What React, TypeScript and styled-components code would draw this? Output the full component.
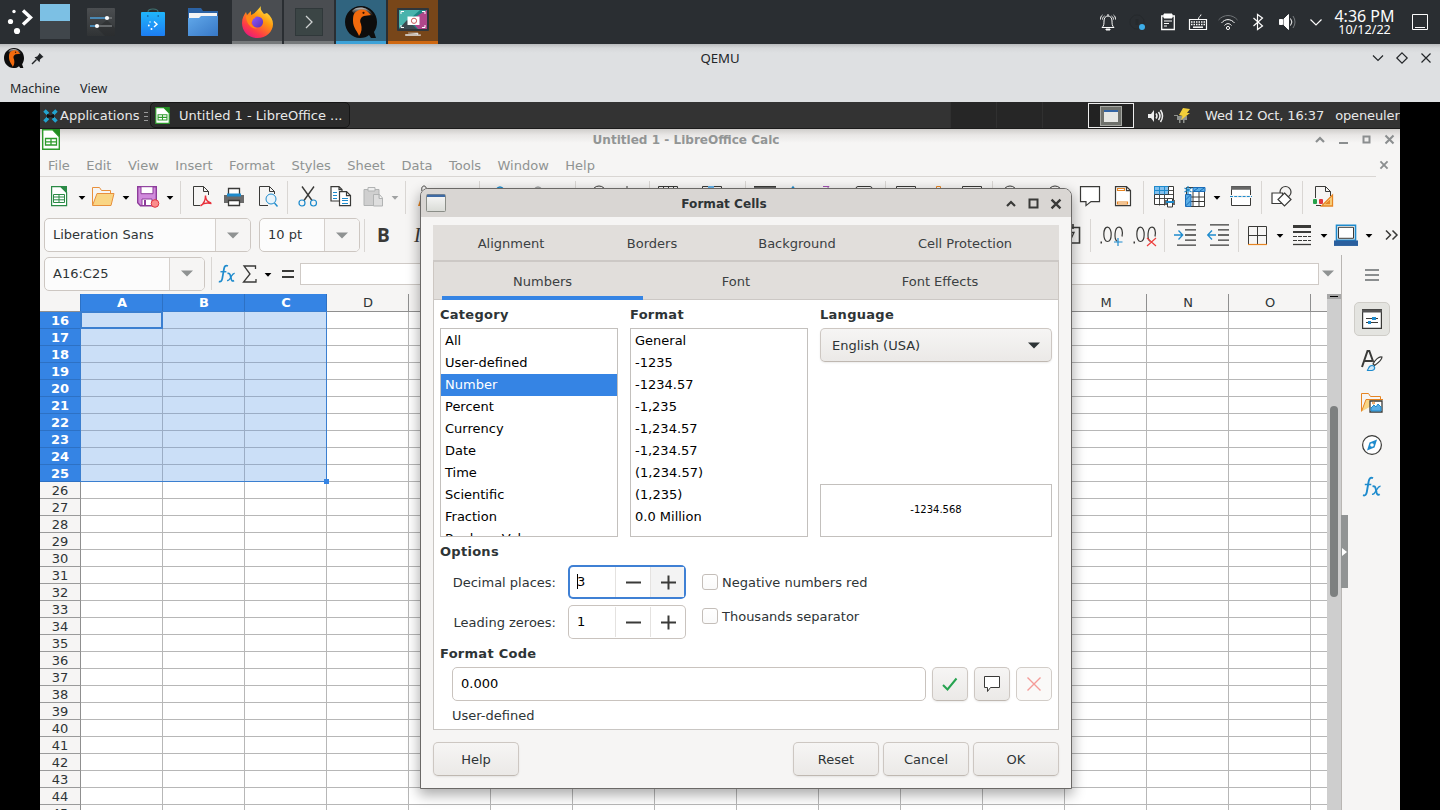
import React from "react";
import styled, { createGlobalStyle, css } from "styled-components";

const INK = "#3a3a38";
const BLUE = "#1e8bcd";
const ORANGE = "#e68523";
const ui = '"DejaVu Sans", sans-serif';
const kde = '"Noto Sans", sans-serif';

const Global = createGlobalStyle`
  * { box-sizing: border-box; }
  body { margin: 0; background: #000; overflow: hidden; }
  svg { display: block; flex: none; overflow: visible; }
`;

const Screen = styled.div`
  width: 1440px;
  height: 810px;
  overflow: hidden;
  display: flex;
  flex-direction: column;
  background: #000;
  font: 13px/16px ${ui};
  color: #2e3436;
  white-space: nowrap;
`;

/* ---------- host desktop panel ---------- */
const HostPanel = styled.header`
  height: 44px;
  flex: none;
  display: flex;
  background: #2a2e32;
  color: #fcfcfc;
  font-family: ${kde};
`;
const Launcher = styled.div<{ $w: number }>`
  width: ${(p) => p.$w}px;
  height: 44px;
  display: flex;
  align-items: center;
  justify-content: center;
`;
const Pager = styled.div`
  width: 30px;
  height: 35px;
  margin: 4px 0 0 2px;
  background: #40464b;
  border-top: 17px solid #7cc0e4;
`;
const TaskTile = styled.div<{ $bg: string; $line: string }>`
  width: 50px;
  height: 44px;
  margin-right: 2px;
  display: flex;
  align-items: center;
  justify-content: center;
  background: ${(p) => p.$bg};
  box-shadow: inset 0 -3px ${(p) => p.$line};
`;
const Tray = styled.div`
  margin-left: auto;
  display: flex;
  width: 347px;
`;
const Clock = styled.div`
  width: 70px;
  text-align: center;
  padding: 8px 0 0 1px;
  font-size: 16px;
  line-height: 17px;
`;
const ClockDate = styled.div`
  font-size: 12.6px;
  line-height: 14px;
  margin-top: -2px;
`;

/* ---------- emulator window ---------- */
const QemuTitle = styled.div`
  height: 30px;
  flex: none;
  display: grid;
  grid-template-columns: 1fr 200px 1fr;
  align-items: center;
  padding: 0 8px 2px 4px;
  background: linear-gradient(#b9bbbd, #d6d8da 4px, #dee0e2 9px);
  font: 13.2px/16px ${kde};
  color: #232629;
`;
const QemuIcons = styled.div<{ $end?: boolean }>`
  display: flex;
  align-items: center;
  gap: 8px;
  ${(p) => p.$end && css`justify-content: flex-end; gap: 12px;`}
`;
const Centered = styled.div`
  text-align: center;
  padding-left: 4px;
`;
const QemuMenu = styled.div`
  height: 28px;
  flex: none;
  display: flex;
  gap: 20px;
  padding: 7px 10px 5px;
  background: #dee0e2;
  font: 12.5px/16px ${kde};
  color: #232629;
`;
const Guest = styled.div`
  position: relative;
  width: 1360px;
  height: 708px;
  margin: 0 40px;
  overflow: hidden;
  display: flex;
  flex-direction: column;
`;

/* ---------- guest panel ---------- */
const GuestPanel = styled.div`
  height: 27px;
  flex: none;
  display: flex;
  background: #333;
  color: #e8e8e8;
  border-bottom: 1px solid #1c1c1c;
  line-height: 18px;
`;
const AppsButton = styled.div`
  width: 110px;
  flex: none;
  display: flex;
  align-items: center;
  padding: 1px 0 0 3px;
  gap: 2px;
`;
const GuestTask = styled.div`
  width: 200px;
  height: 26px;
  flex: none;
  display: flex;
  align-items: center;
  gap: 9px;
  padding: 1px 0 0 4px;
  background: #2b2b2b;
  border: 1px solid #161616;
  border-radius: 5px;
`;
const Workspaces = styled.div`
  margin-left: 600px;
  width: 138px;
  flex: none;
  display: flex;
  background: #262626;
`;
const Workspace = styled.div`
  width: 46px;
  border-left: 1px solid #303030;
`;
const ActiveWorkspace = styled.div`
  width: 46px;
  height: 25px;
  margin-top: 1px;
  flex: none;
  border: 1px solid #eee;
  background: #222;
  display: flex;
  align-items: center;
  justify-content: center;
`;
const PanelStatus = styled.div`
  display: flex;
  align-items: center;
  padding: 1px 0 0 13px;
`;
const PanelText = styled.span<{ $ml: number }>`
  margin-left: ${(p) => p.$ml}px;
  letter-spacing: -0.13px;
`;

/* ---------- spreadsheet window ---------- */
const Calc = styled.div`
  flex: 1;
  min-height: 0;
  display: flex;
  flex-direction: column;
  background: linear-gradient(#cfcdcb, #e9e7e6 6px, #f6f5f4 14px);
`;
const CalcTitle = styled.div`
  height: 23px;
  flex: none;
  display: grid;
  grid-template-columns: 496px 300px 1fr;
  padding-right: 6px;
  line-height: 22px;
  font-weight: bold;
  font-size: 12.05px;
  color: #929595;
  text-align: center;
`;
const TitleButtons = styled.div<{ $top: number; $gap: number }>`
  display: flex;
  justify-content: flex-end;
  gap: ${(p) => p.$gap}px;
  padding-top: ${(p) => p.$top}px;
`;
const MenuBar = styled.div`
  height: 25px;
  margin-right: 24px;
  flex: none;
  display: flex;
  gap: 16.5px;
  padding: 6px 0 0 8px;
  border-bottom: 1px solid #d9d6d3;
  color: #8f9392;
`;
const DocClose = styled.div`
  margin: 3px -12px 0 auto;
`;
const Toolbar = styled.div<{ $h: number }>`
  height: ${(p) => p.$h}px;
  flex: none;
  display: flex;
  align-items: center;
`;
const Slot = styled.div<{ $gap: number; $w?: number }>`
  margin-left: ${(p) => p.$gap}px;
  width: ${(p) => p.$w ?? 22}px;
  flex: none;
`;
const Rule = styled.div<{ $gap: number }>`
  margin-left: ${(p) => p.$gap}px;
  width: 1px;
  height: 33px;
  flex: none;
  background: #d9d6d3;
`;
const Combo = styled.div<{ $w: number; $gap: number }>`
  width: ${(p) => p.$w}px;
  height: 34px;
  margin-left: ${(p) => p.$gap}px;
  flex: none;
  display: flex;
  border: 1px solid #cdc7c2;
  border-radius: 5px;
  background: #fcfcfc;
  line-height: 31px;
  padding-left: 8px;
  overflow: hidden;
`;
const ComboArrow = styled.div`
  margin-left: auto;
  width: 35px;
  padding-right: 1px;
  display: flex;
  align-items: center;
  justify-content: center;
  border-left: 1px solid #d5d0cc;
  background: #f6f5f4;
`;
const Glyph = styled.span<{ $gap: number; $w: number; $size: number; $italic?: boolean }>`
  margin-left: ${(p) => p.$gap}px;
  width: ${(p) => p.$w}px;
  flex: none;
  font: bold ${(p) => p.$size}px/22px "Open Sans", sans-serif;
  color: ${INK};
  ${(p) => p.$italic && css`font-family: "Liberation Serif", serif; font-style: italic; font-weight: normal;`}
`;
const Workarea = styled.div`
  flex: 1;
  min-height: 0;
  display: flex;
`;
const SheetPane = styled.div`
  width: 1301px;
  flex: none;
  display: flex;
  flex-direction: column;
`;
const FormulaInput = styled.div`
  width: 1019px;
  height: 22px;
  margin-left: 6px;
  background: #fff;
  border: 1px solid #cfcac6;
`;
const SheetBody = styled.div`
  flex: 1;
  min-height: 0;
  display: flex;
`;
const Grid = styled.div`
  position: relative;
  width: 1287px;
  overflow: hidden;
  background: #fff;
`;
const GridRow = styled.div`
  display: flex;
  width: 1400px;
`;
const headCell = css<{ $on?: boolean }>`
  flex: none;
  text-align: center;
  color: ${(p) => (p.$on ? "#fff" : "#2e3436")};
  font-weight: ${(p) => (p.$on ? "bold" : "normal")};
  background: ${(p) => (p.$on ? "#3584e4" : "#f6f5f4")};
`;
const ColHead = styled.div<{ $on?: boolean }>`
  ${headCell}
  width: 82px;
  height: 18px;
  border-right: 1px solid ${(p) => (p.$on ? "#2d71c4" : "#8f8f8f")};
  border-bottom: 1px solid #8f8f8f;
  line-height: 18px;
  padding-left: 1px;
`;
const Corner = styled.div`
  width: 41px;
  height: 18px;
  flex: none;
  background: #f6f5f4;
  border-right: 1px solid #2d71c4;
  border-bottom: 1px solid #8f8f8f;
`;
const RowHead = styled.div<{ $on?: boolean }>`
  ${headCell}
  width: 41px;
  height: 17px;
  border-right: 1px solid ${(p) => (p.$on ? "#2d71c4" : "#8f8f8f")};
  border-bottom: 1px solid ${(p) => (p.$on ? "#2d71c4" : "#9a9a9a")};
  line-height: 17px;
`;
const Cell = styled.div<{ $on?: boolean }>`
  width: 82px;
  height: 17px;
  flex: none;
  background: ${(p) => (p.$on ? "#cbdff7" : "#fff")};
  border-right: 1px solid ${(p) => (p.$on ? "#9badc5" : "#b7b7b7")};
  border-bottom: 1px solid ${(p) => (p.$on ? "#9badc5" : "#b7b7b7")};
`;
const Selection = styled.div`
  position: absolute;
  left: 40px;
  top: 17px;
  width: 247px;
  height: 171px;
  border: 1px solid #3b7fd0;
`;
const CellCursor = styled.div`
  width: 82px;
  height: 17px;
  border: solid #3b7fd0;
  border-width: 1px 2px 2px 1px;
`;
const FillHandle = styled.div`
  position: absolute;
  right: -3px;
  bottom: -3px;
  width: 5px;
  height: 5px;
  background: #3584e4;
`;
const ScrollTrack = styled.div`
  width: 14px;
  background: #cecece;
  padding-left: 3px;
`;
const SplitGrip = styled.div`
  height: 5px;
  margin-left: -3px;
  background: #a8a8a8;
  display: flex;
  justify-content: center;
  align-items: center;
  &::before { content: ""; width: 8px; height: 1px; background: #000; }
`;
const ScrollThumb = styled.div`
  width: 8px;
  height: 191px;
  margin-top: 107px;
  border-radius: 4px;
  background: #7d8080;
`;
const Sidebar = styled.div`
  position: relative;
  width: 59px;
  margin-top: 2px;
  border-left: 1px solid #b9b6b3;
  display: flex;
  flex-direction: column;
  align-items: center;
  gap: 8px;
  padding: 2px 0 0 2px;
`;
const SideButton = styled.div<{ $on?: boolean; $first?: boolean }>`
  width: 36px;
  height: ${(p) => (p.$first ? 36 : 34)}px;
  margin-bottom: ${(p) => (p.$first ? 1 : 0)}px;
  flex: none;
  display: flex;
  align-items: center;
  justify-content: center;
  border-radius: 5px;
  ${(p) => p.$on && css`background: #e4e4e0; border: 1px solid #cfcdc8;`}
`;
const CollapseHandle = styled.div`
  position: absolute;
  left: -1px;
  top: 260px;
  width: 7px;
  height: 73px;
  background: #919494;
  display: flex;
  align-items: center;
`;

/* ---------- dialog ---------- */
const Dialog = styled.section`
  position: absolute;
  left: 380px;
  top: 86px;
  width: 652px;
  height: 601px;
  border: 1px solid #6b6967;
  border-radius: 8px 8px 0 0;
  background: #f6f5f4;
  box-shadow: 0 5px 13px 1px rgba(0, 0, 0, 0.33);
`;
const DialogTitle = styled.div`
  height: 28px;
  border-radius: 7px 7px 0 0;
  background: #d9d6d3;
  display: grid;
  grid-template-columns: 198px 200px 1fr;
  padding: 0 10px 0 5px;
  font-weight: bold;
  font-size: 12.1px;
  line-height: 30px;
  text-align: center;
`;
const WindowMenu = styled.div`
  padding-top: 5px;
`;
const Notebook = styled.div`
  width: 626px;
  height: 505px;
  margin: 8px 12px 12px;
  display: flex;
  flex-direction: column;
`;
const Tabs = styled.div<{ $h: number; $last?: boolean }>`
  height: ${(p) => p.$h}px;
  flex: none;
  display: flex;
  padding-left: ${(p) => (p.$last ? 8 : 0)}px;
  background: #e1dedb;
  border-bottom: ${(p) => (p.$last ? 1 : 2)}px solid #ccc8c5;
  line-height: ${(p) => (p.$last ? 39 : 38)}px;
  ${(p) => p.$last && css`border-left: 1px solid #cdc7c2; border-right: 1px solid #cdc7c2;`}
`;
const Tab = styled.div<{ $w: number; $gap?: number; $on?: boolean }>`
  width: ${(p) => p.$w}px;
  margin-left: ${(p) => p.$gap ?? 0}px;
  flex: none;
  text-align: center;
  color: #3b4042;
  ${(p) => p.$on && css`margin-bottom: -1px; box-shadow: inset 0 -4px #3584e4;`}
`;
const TabBody = styled.div`
  flex: 1;
  min-height: 0;
  background: #fff;
  border: 1px solid #c9c6c3;
  border-top: 0;
  padding: 6px 6px 0;
`;
const Heading = styled.div<{ $mt?: number }>`
  margin-top: ${(p) => p.$mt ?? 0}px;
  font-weight: bold;
  letter-spacing: 0.28px;
  height: 18px;
  line-height: 18px;
`;
const Columns = styled.div`
  display: flex;
  gap: 12px;
`;
const ListColumn = styled.div`
  width: 178px;
`;
const ListBox = styled.div`
  height: 209px;
  margin-top: 4px;
  padding-top: 1px;
  border: 1px solid #c3c0bd;
  overflow: hidden;
  color: #000;
`;
const ListItem = styled.div<{ $on?: boolean }>`
  height: 22px;
  line-height: 22px;
  padding-left: 4px;
  ${(p) => p.$on && css`background: #3584e4; color: #fff;`}
`;
const LangColumn = styled.div`
  width: 232px;
`;
const buttonFace = css`
  border: 1px solid #cdc7c2;
  border-bottom-color: #bfb8b1;
  border-radius: 5px;
  background: linear-gradient(#f6f5f4, #ebe9e7);
  box-shadow: 0 1px 2px rgba(0, 0, 0, 0.08);
`;
const LangSelect = styled.div`
  ${buttonFace}
  height: 34px;
  margin-top: 4px;
  padding: 1px 11px 0;
  display: flex;
  align-items: center;
  justify-content: space-between;
`;
const Preview = styled.div`
  height: 53px;
  margin-top: 122px;
  border: 1px solid #c3c0bd;
  text-align: center;
  font-size: 10px;
  line-height: 50px;
  color: #000;
`;
const OptionRows = styled.div`
  height: 80px;
  display: flex;
  margin-top: 4px;
`;
const NumberFields = styled.div`
  width: 246px;
  display: flex;
  flex-direction: column;
  gap: 6px;
`;
const Field = styled.div`
  display: flex;
  justify-content: flex-end;
  align-items: center;
  gap: 12px;
  height: 34px;
`;
const FieldLabel = styled.span`
  padding-top: 2px;
`;
const Spin = styled.div<{ $focus?: boolean }>`
  width: 118px;
  height: 34px;
  display: grid;
  grid-template-columns: 1fr 35px 35px;
  background: #fff;
  color: #000;
  border-radius: 5px;
  line-height: 31px;
  overflow: hidden;
  padding: 1px;
  box-shadow: inset 0 0 0 ${(p) => (p.$focus ? "2px #3f80d4" : "1px #c9c3be")};
`;
const SpinValue = styled.div`
  padding-left: 8px;
  display: flex;
  align-items: center;
  height: 31px;
`;
const Caret = styled.i`
  width: 1px;
  height: 15px;
  margin-right: -1px;
  background: #000;
`;
const SpinButton = styled.div<{ $hot?: boolean }>`
  display: flex;
  align-items: center;
  justify-content: center;
  border-left: 1px solid #e4e2e0;
  padding-left: ${(p) => (p.$hot ? 1 : 0)}px;
  margin: 1px ${(p) => (p.$hot ? 1 : 0)}px 1px 0;
  background: ${(p) => (p.$hot ? "#f3f3f3" : "transparent")};
`;
const Checks = styled.div`
  margin: 9px 0 0 16px;
  display: flex;
  flex-direction: column;
  gap: 18px;
`;
const Check = styled.div`
  display: flex;
  align-items: center;
  gap: 4px;
  height: 16px;
  line-height: 18px;
`;
const CheckLabel = styled.span`
  padding-top: 1px;
`;
const CheckBox = styled.i`
  width: 16px;
  height: 16px;
  flex: none;
  border: 1px solid #c4beb9;
  border-radius: 3px;
  background: linear-gradient(#fff, #fafafa);
`;
const CodeRow = styled.div`
  display: flex;
  gap: 6px;
  margin: 4px 0 0 12px;
`;
const CodeInput = styled.div`
  width: 474px;
  height: 34px;
  border: 1px solid #c9c3be;
  border-radius: 5px;
  padding-left: 8px;
  line-height: 32px;
  color: #000;
`;
const IconButton = styled.div<{ $off?: boolean }>`
  ${buttonFace}
  width: 36px;
  height: 34px;
  display: flex;
  align-items: center;
  justify-content: center;
  ${(p) => p.$off && css`background: #faf9f8; box-shadow: none; border-color: #d2cdc8;`}
`;
const CodeNote = styled.div`
  margin: 7px 0 0 12px;
`;
const Actions = styled.div`
  display: flex;
  gap: 4px;
  padding: 0 12px;
`;
const Button = styled.div<{ $start?: boolean }>`
  ${buttonFace}
  width: 86px;
  height: 34px;
  text-align: center;
  line-height: 34px;
  ${(p) => p.$start && css`margin-right: auto;`}
`;
const DocIcon = styled.div`
  padding-left: 2px;
`;

/* ---------- drawings ---------- */
type IconProps = { w?: number; h?: number; c?: string; sw?: number; children: React.ReactNode };
const Icon = ({ w = 22, h = 22, c = INK, sw = 1, children }: IconProps) => (
  <svg width={w} height={h} viewBox={`0 0 ${w} ${h}`} fill="none" stroke={c} strokeWidth={sw}>{children}</svg>
);
const Arrow = ({ c = "#000" }: { c?: string }) => (
  <Icon w={8} h={22} c="none"><path d="M.6 10h6.8L4 13.8z" fill={c} /></Icon>
);
const BigArrow = ({ c = "#8f9292" }: { c?: string }) => (
  <Icon w={12} h={7} c="none"><path d="M0 .5h12L6 6.5z" fill={c} /></Icon>
);
const QemuLogo = ({ size }: { size: number }) => (
  <svg width={size} height={size} viewBox="0 0 32 32">
    <defs>
      <linearGradient id="beak" x1="0" y1="0" x2="0" y2="1"><stop offset="0" stopColor="#ccc" /><stop offset=".7" stopColor="#444" stopOpacity="0" /></linearGradient>
    </defs>
    <path d="M16 0C7 0 0 7 0 16s7 16 15 16c4 0 7-1 9-3l2 3h5l-2-6c2-3 3-6 3-10C32 7 25 0 16 0z" fill="#0d0d0d" />
    <path d="M7 5C12-1 24 1 28 9l1 5-5-2-6-5-8 2z" fill="url(#beak)" />
    <path d="M9 8c3-5 10-6 14-2l3 3-7 1c-3 1-5 4-3 8 1 4 1 8-2 12-1-4-6-8-6-15 0-3 0-5 1-7z" fill="#f26a0d" />
    <circle cx="18.5" cy="6.8" r="1.1" fill="#3a1500" />
  </svg>
);
const CalcDoc = ({ w = 18, h = 21 }: { w?: number; h?: number }) => (
  <svg width={w} height={h} viewBox="0 0 18 21">
    <path d="M.7.7h10l6.6 7v12.6H.7z" fill="#fff" stroke="#2e9b2c" strokeWidth="1.4" />
    <path d="M10 0h8v8z" fill="#228b22" />
    <path d="M3.5 9.500h11v6.500h-11zM3.500 12.800h11M9 9.500v6.500" stroke="#2e9b2c" fill="none" strokeWidth="1.3" />
  </svg>
);
const WinX = ({ c = "#8b8e8f", s = 9 }: { c?: string; s?: number }) => (
  <svg width={s} height={s} viewBox="0 0 9 9" stroke={c} strokeWidth="2.1"><path d="M.5.5l8 8M8.5.5l-8 8" /></svg>
);
const WinShade = ({ c = "#8b8e8f" }: { c?: string }) => (
  <svg width="10" height="9" viewBox="0 0 10 9" fill="none" stroke={c} strokeWidth="2.2"><path d="M1 7l4-4 4 4" /></svg>
);
const WinMax = ({ c = "#8b8e8f", s = 7 }: { c?: string; s?: number }) => (
  <svg width="9" height="9" viewBox="0 0 9 9" fill="none" stroke={c} strokeWidth="2"><rect x={(10 - s) / 2} y={(10 - s) / 2} width={s - 1} height={s - 1} /></svg>
);
const MiniWindow = () => (
  <svg width="20" height="18" viewBox="0 0 20 18">
    <defs><linearGradient id="pane" x1="0" y1="0" x2="0" y2="1"><stop offset="0" stopColor="#f8f8f8" /><stop offset="1" stopColor="#d9dbd6" /></linearGradient></defs>
    <rect x=".5" y=".5" width="19" height="17" rx="1" fill="url(#pane)" stroke="#8b8e88" />
    <path d="M1 1.8h18" stroke="#3f6ba4" strokeWidth="2.4" />
  </svg>
);
const Fx = ({ size = 22 }: { size?: number }) => (
  <svg width={size} height={size} viewBox="0 0 22 22" fill="none" stroke={BLUE} strokeWidth="1.5">
    <path d="M12 2.2c-2.500-1.400-3.800.3-4.300 3L5.800 16c-.5 2.600-1.600 4-3.800 3.200" strokeWidth="1.900" />
    <path d="M3.800 8.500h6.500" />
    <path d="M11.500 10.500c1.800-.8 2.700.2 3.200 2.200l1 4.200c.5 1.800 1.500 2.300 3 1.300" strokeWidth="1.900" />
    <path d="M19.500 10.400c-1.500-.3-2.500 1-3.700 3.100l-1.600 2.700c-.9 1.600-1.800 2.300-3.100 1.800" />
  </svg>
);
const Decimals = ({ add }: { add?: boolean }) => (
  <Icon w={25} sw={1.2}>
    <path d="M.5 18.500h1.500" strokeWidth="2" />
    <path d="M7.500 3.200C2.600 3.200 2.600 17.500 7.500 17.500S12.400 3.200 7.500 3.200zM22 12.500c1.200-5-.3-9.300-3-9.300-4.800 0-5 12-2 14" />
    {add ? <path d="M18 14v8M14 18h8.500" stroke={BLUE} /> : <path d="M14 14l9 8M23 14l-9 8" stroke="#ed3d3b" />}
  </Icon>
);
const Indent = ({ out }: { out?: boolean }) => (
  <Icon w={22} sw={1.3}>
    <path d="M3 .8h19M11 5.900h11M11 11h11M11 16.100h11M3 21.200h19" />
    {out ? <path d="M9 11H1M5 6.500L.7 11 5 15.500" stroke={BLUE} /> : <path d="M0 11h8M4.500 6.500L8.700 11l-4.200 4.500" stroke={BLUE} />}
  </Icon>
);
const Plus = () => <Icon w={15} h={15} sw={2}><path d="M0 7.500h15M7.500.5v14" /></Icon>;
const Minus = () => <Icon w={15} h={15} sw={2}><path d="M0 7.500h15" /></Icon>;

const HostIcons = () => (
  <>
    <Launcher $w={38}>
      <svg width="38" height="44" viewBox="0 0 38 44" fill="#fff">
        <circle cx="14" cy="11.5" r="1.7" /><circle cx="10.5" cy="21.5" r="2.6" /><circle cx="17" cy="31" r="3.1" />
        <path d="M23 10.5l7.5 7-7.5 7" fill="none" stroke="#fff" strokeWidth="3.4" />
      </svg>
    </Launcher>
    <Pager />
    <Launcher $w={61}>
      <svg width="28" height="28" viewBox="0 0 28 28">
        <defs><linearGradient id="slate" x1="0" y1="0" x2="0" y2="1"><stop offset="0" stopColor="#4b4e51" /><stop offset="1" stopColor="#303335" /></linearGradient></defs>
        <rect width="28" height="28" rx="1" fill="url(#slate)" /><path d="M10 20l10-8 8 8v8H18z" fill="#26282a" opacity=".5" />
        <path d="M3 10h16M3 18h6" stroke="#4d9fd8" strokeWidth="1.6" /><path d="M22 10h3M12 18h13" stroke="#777b7e" strokeWidth="1.6" />
        <circle cx="20" cy="10" r="2.1" fill="#fff" /><circle cx="10" cy="18" r="2.1" fill="#fff" />
      </svg>
    </Launcher>
    <Launcher $w={43}>
      <svg width="24" height="28" viewBox="0 0 24 28">
        <defs><linearGradient id="bag" x1="0" y1="0" x2="0" y2="1"><stop offset="0" stopColor="#20b5fb" /><stop offset="1" stopColor="#1d7df2" /></linearGradient></defs>
        <path d="M7 6V4q0-3 5-3t5 3v2" fill="none" stroke="#3f7473" strokeWidth="1.2" />
        <rect y="4" width="24" height="24" rx="1" fill="url(#bag)" /><circle cx="6.8" cy="8" r=".8" fill="#114e88" /><circle cx="17.2" cy="8" r=".8" fill="#114e88" />
        <path d="M13 13.500l3 2.700-3 2.800" stroke="#fff" strokeWidth="1.400" fill="none" /><circle cx="9" cy="14" r=".7" fill="#fff" /><circle cx="7.8" cy="17.5" r=".9" fill="#fff" /><circle cx="10.5" cy="21" r="1" fill="#fff" />
      </svg>
    </Launcher>
    <Launcher $w={58}>
      <svg width="30" height="28" viewBox="0 0 30 28">
        <defs><linearGradient id="fold" x1="0" y1="0" x2="1" y2="1"><stop offset="0" stopColor="#61a8ea" /><stop offset="1" stopColor="#3778c6" /></linearGradient></defs>
        <path d="M0 0h13l2 3h15v25H0z" fill="#2b62a4" /><path d="M1 5h28v6H1z" fill="#f4f4f4" /><path d="M0 10h11l2-2h17v20H0z" fill="url(#fold)" />
      </svg>
    </Launcher>
    <TaskTile $bg="#4a4d51" $line="#76797b">
      <svg width="31" height="32" viewBox="0 0 31 32">
        <defs>
          <linearGradient id="fire" x1=".85" y1="0" x2=".2" y2="1"><stop offset="0" stopColor="#fff44f" /><stop offset=".4" stopColor="#ff980e" /><stop offset=".75" stopColor="#ff3b47" /><stop offset="1" stopColor="#e31587" /></linearGradient>
          <linearGradient id="globe" x1="0" y1="0" x2="1" y2="1"><stop offset="0" stopColor="#9059ff" /><stop offset="1" stopColor="#5b2fb0" /></linearGradient>
        </defs>
        <path d="M19 0c-1 4 1 5 3 8l3-1c4 3 6 7 6 11 0 8-7 14-15.5 14S0 26 0 17C0 12 2 9 4 6l1 3 4-4 0 4c3-1 6-4 10-9z" fill="url(#fire)" />
        <circle cx="15.5" cy="16" r="5.6" fill="url(#globe)" />
        <path d="M4 10c4-1 8 0 10 2-4 0-3 3-5 5 1 3 4 5 7 5-6 2-12-4-12-12z" fill="#ff8a16" />
      </svg>
    </TaskTile>
    <TaskTile $bg="#4a4d51" $line="#76797b">
      <svg width="28" height="28" viewBox="0 0 28 28"><rect x=".5" y=".5" width="27" height="27" fill="#3b4545" stroke="#30383a" /><path d="M11 8l6 6-6 6" stroke="#ced2d2" strokeWidth="1.3" fill="none" /></svg>
    </TaskTile>
    <TaskTile $bg="#30647f" $line="#3ca2d8"><QemuLogo size={32} /></TaskTile>
    <TaskTile $bg="#784619" $line="#cf6811">
      <svg width="32" height="28" viewBox="0 0 32 28">
        <rect width="32" height="23" rx="1" fill="#30363b" /><path d="M2 2h28v19H2z" fill="#1c8584" /><path d="M2 2h21l-9 8L2 20z" fill="#48b3ac" /><path d="M2 21l8-9 10 9z" fill="#3d4a50" /><path d="M30 2v19h-9l-8-9z" fill="#b0478a" />
        <path d="M4 6V3.500h3M25 3.500h3V6M4 17v2.500h3M25 19.500h3V17" stroke="#fff" fill="none" />
        <rect x="10.5" y="8.5" width="12" height="8.5" fill="#fff" /><circle cx="17" cy="12.8" r="2.6" stroke="#c75a5a" fill="none" />
        <path d="M11 25h10v1.500H8.500v1h15v-1" stroke="#ddd" fill="#ddd" strokeWidth=".6" />
      </svg>
    </TaskTile>
  </>
);

const TrayIcons = () => (
  <Tray>
    <Launcher $w={30}>
      <Icon w={18} h={18} c="#fcfcfc"><path d="M3 14.500c2-1.500 2-4 2-6.500 0-3 1.500-5 4-5s4 2 4 5c0 2.500 0 5 2 6.500zM3.500 2C2 3 1.500 4.500 1.500 6.500M5.500 3C4 4 3.500 5 3.500 6.500M14.500 2c1.500 1 2 2.500 2 4.500M12.500 3c1.500 1 2 2 2 3.500M9 1v2" /><path d="M7 16h4v1H7z" fill="#fff" /></Icon>
    </Launcher>
    <Launcher $w={30}>
      <Icon w={18} h={18} c="#25292c"><circle cx="8" cy="9" r="7" /><path d="M8 6v6" strokeWidth="3" /><circle cx="13" cy="14" r="3" fill="#3daee9" stroke="none" /></Icon>
    </Launcher>
    <Launcher $w={30}>
      <Icon w={14} h={18} c="#fcfcfc"><path d="M.7 3h12.600v13.500H.7z" strokeWidth="1.3" /><path d="M3 1h8v4H3z" fill="#fff" /><path d="M3 8h8M3 10.500h5M3 13h3" /></Icon>
    </Launcher>
    <Launcher $w={30}>
      <Icon w={18} h={18} c="#fcfcfc"><path d="M.5 6.500h17v10H.5z" strokeWidth="1.2" /><path d="M9.500 6c0-3 2-1.500 2.500-4.500" /><path d="M2 9h14M2 11.500h14" strokeDasharray="1.5 1" strokeWidth="1.5" /><path d="M4 14.200h10" strokeWidth="1.5" /></Icon>
    </Launcher>
    <Launcher $w={30}>
      <Icon w={20} h={18} c="#fcfcfc"><path d="M.5 7c5-6 14-6 19 0" stroke="#6f7376" /><path d="M3.500 10c3.500-4.500 9.500-4.500 13 0M6.500 12.500c2-2.500 5-2.500 7 0" /><circle cx="10" cy="15" r="1.6" /></Icon>
    </Launcher>
    <Launcher $w={30}>
      <Icon w={12} h={18} c="#fcfcfc" sw={1.2}><path d="M1.500 5l9 8-5 3.500v-15l5 3.500-9 8" /></Icon>
    </Launcher>
    <Launcher $w={30}>
      <Icon w={18} h={18} c="#fcfcfc"><path d="M.5 6.500h3v5h-3zM5 6l4.500-4.500v15L5 12z" fill="#fff" /><path d="M11.500 5.500q2.800 3.500 0 7" /><path d="M14 3q4 6 0 12" stroke="#777b7e" /></Icon>
    </Launcher>
    <Launcher $w={26}><Icon w={12} h={7} c="#fcfcfc" sw={1.2}><path d="M.5.5L6 6 11.500.5" /></Icon></Launcher>
    <Clock>4:36 PM<ClockDate>10/12/22</ClockDate></Clock>
    <Launcher $w={41}><Icon w={16} h={16} c="#fcfcfc"><path d="M.5.5h15v15H.5zM3 13.500h10" /></Icon></Launcher>
  </Tray>
);

const StandardBar = () => (
  <Toolbar $h={40}>
    <Slot $gap={8}><Icon c="#2b8a46" sw={1.2}><path d="M3.600.6h9l6 6v13h-15z" fill="#fff" /><path d="M12 0h7v7z" fill="#2b8a46" stroke="none" /><path d="M5.500 8.500h11v8h-11zM5.500 11h11M5.500 13.800h11M11 8.500v8" strokeWidth="1" /></Icon></Slot>
    <Slot $gap={8} $w={8}><Arrow /></Slot>
    <Slot $gap={6}><Icon c="#e8903d"><path d="M.5 19V1.500h7l2 3h9v3" /><path d="M.5 19.500L5 7.500h17l-3 12z" fill="#f9d584" /></Icon></Slot>
    <Slot $gap={8} $w={8}><Arrow /></Slot>
    <Slot $gap={7}><Icon c="#8d3c9a"><path d="M.7.7h18.600v19H3.500l-2.800-3z" fill="#d08bdc" strokeWidth="1.4" /><path d="M4 .7h12v7H4z" fill="#fff" /><path d="M5 13h10v6.500H5z" fill="#fff" /><path d="M8 14v5" strokeWidth="2" /><circle cx="18" cy="17.5" r="3.8" fill="#fb8d8d" stroke="#e0373f" /></Icon></Slot>
    <Slot $gap={7} $w={8}><Arrow /></Slot>
    <Rule $gap={6} />
    <Slot $gap={10}><Icon><path d="M9 19.500H2.500V.5h10l5 5V9M12.500.5v5h5" /><path d="M9.500 20c3-2 5-6 5-10.500M14.500 9.500c0 4 2 6.500 5.500 7.500M9.500 19.500c2.500-2 7-3 11-2" stroke="#e8303a" strokeWidth="1.4" /></Icon></Slot>
    <Slot $gap={10}><Icon><path d="M1 9h20v8H1z" fill="#6b6b6b" stroke="none" /><path d="M5.500 8V2.500h11V8" fill="#fff" strokeWidth="1.3" /><path d="M4 9h14" stroke={BLUE} strokeWidth="3" /><path d="M5.500 14.500h11v5h-11z" fill="#fff" strokeWidth="1.3" /></Icon></Slot>
    <Slot $gap={12}><Icon><path d="M11 19.500H2.500V.5h10l5 5V8M12.500.5v5h5" /><circle cx="14" cy="13" r="5" stroke={BLUE} fill="#e9f4fb" /><path d="M17.500 17l3 3.500" stroke={BLUE} strokeWidth="1.4" /></Icon></Slot>
    <Rule $gap={8} />
    <Slot $gap={9}><Icon sw={1.4}><path d="M5 .5l10 14M17 .5L7 14.500" /><circle cx="5" cy="17" r="3" stroke={BLUE} strokeWidth="1.2" /><circle cx="16.5" cy="17" r="3" stroke={BLUE} strokeWidth="1.2" /></Icon></Slot>
    <Slot $gap={11}><Icon sw={1.2}><path d="M1 .6h8l3 3V15H1zM9 .6v3h3" fill="#fff" /><path d="M9.500 5.600h7l4 4v10h-11z" fill="#fff" /><path d="M16.500 5.600v4h4" /><path d="M3 6.500h4M3 9.500h4M3 12.500h4M12 12.500h6M12 14.500h6M12 17.500h6" stroke={BLUE} strokeWidth="1" /></Icon></Slot>
    <Slot $gap={10}><Icon c="#b1b3b3"><path d="M2 3.500h15v16H2z" fill="#cfcfcf" /><path d="M6 5V1.500h7V5z" fill="#eee" /><path d="M11.500 8.500h6l3 3.500v8h-9zM17 8.500v4h4" fill="#dedede" /></Icon></Slot>
    <Slot $gap={7} $w={8}><Arrow c="#a0a2a2" /></Slot>
    <Rule $gap={6} />
    <Slot $gap={12}><Icon><path d="M4 5C3 1 5 0 6 0s3 1 2 5" /><path d="M0 20l3-9v9z" fill={ORANGE} stroke="none" /></Icon></Slot>
    <Rule $gap={39} />
    <Slot $gap={10}><Icon c={BLUE} sw={1.4}><path d="M6 3.500q4-5 8 0" /></Icon></Slot>
    <Slot $gap={14}><Icon c="#a0a2a2" sw={1.4}><path d="M8 3.500q4-5 8 0" /></Icon></Slot>
    <Rule $gap={27} />
    <Slot $gap={12}><Icon><circle cx="11" cy="7" r="7" /></Icon></Slot>
    <Slot $gap={6}><Icon><path d="M11 0v12" /></Icon></Slot>
    <Rule $gap={11} />
    <Slot $gap={7}><Icon><path d="M1.500.5h19v19h-19zM6.500.5v19M11.500.5v19M16.500.5v19" /></Icon></Slot>
    <Slot $gap={22}><Icon><path d="M1.500.5h19v19h-19z" /><path d="M7 0h6v19H7z" fill="#65b1e8" stroke="none" /></Icon></Slot>
    <Rule $gap={22} />
    <Slot $gap={8}><Icon><path d="M0 .5h22" /><path d="M0 2.500h22" strokeWidth="3" stroke="#666" /></Icon></Slot>
    <Slot $gap={6}><Icon c={BLUE} sw={1.5}><path d="M11 1v11M9.500 3L11 1l1.500 2" /></Icon></Slot>
    <Slot $gap={11}><Icon c="#a050b0"><path d="M8 .5h6L9 6" /></Icon></Slot>
    <Slot $gap={16}><Icon><rect x="3" y=".5" width="16" height="16" rx="2" /></Icon></Slot>
    <Rule $gap={10} />
    <Slot $gap={9}><Icon><path d="M1.500.5h19v16h-19z" /></Icon></Slot>
    <Slot $gap={10}><Icon c={ORANGE}><path d="M9.500.5h4v12h-4z" /></Icon></Slot>
    <Slot $gap={12}><Icon><path d="M1.500.5h19v16h-19z" /></Icon></Slot>
    <Rule $gap={9} />
    <Slot $gap={6}><Icon><circle cx="11" cy="7" r="7" /></Icon></Slot>
    <Slot $gap={23}><Icon><circle cx="11" cy="7" r="7" /></Icon></Slot>
    <Slot $gap={13}><Icon sw={1.2}><path d="M1.500.6h19v15H12l-5 4v-4H1.500z" fill="#fff" /></Icon></Slot>
    <Slot $gap={11}><Icon sw={1.2}><path d="M3.500.6h11l4 4v15h-15zM14.500.6v4h4" fill="#fff" /><path d="M5.500 2.500h7v2h-7zM5.500 16h10v2h-10z" stroke={ORANGE} /></Icon></Slot>
    <Rule $gap={9} />
    <Slot $gap={10}><Icon><path d="M.5.5h19v18H.5z" fill="#fff" /><path d="M.5.5h14v8H.5z" fill="#82c0ee" stroke={BLUE} /><path d="M14.500 .5v8M.5 8.500h19M.5 12.500h14M5.500 8.500v11M10.500 8.500v11M15 4.500h5" strokeWidth=".9" /><path d="M.5 4.500h14M5.500.5v8M10.500.5v8" stroke={BLUE} /><path d="M11 14h10v5H11z" fill="#666" stroke="none" /><path d="M13.500 12.500h5V21h-5z" fill="#fff" /><path d="M12 16h8" stroke={BLUE} strokeWidth="2" /></Icon></Slot>
    <Slot $gap={8}><Icon><path d="M2.500 1.500h18v19h-18z" fill="#fff" /><path d="M2.500 11h18M2.500 15.500h18M9 5v15M15 5v15" /><path d="M9 1.500h12v4H9zM1.500 8.500H7v12H1.500z" fill="#5aaee6" stroke="#1b6cb8" /><path d="M1.500 14l5-5M1.500 20l5-5M10 5l4-3M16 5l4-3" stroke="#1b6cb8" /><path d="M4 0v8M.5 2l7 4M7.500 2l-7 4" stroke={BLUE} strokeWidth="1.2" /></Icon></Slot>
    <Slot $gap={7} $w={8}><Arrow /></Slot>
    <Slot $gap={9}><Icon><path d="M1.500.5h19v19h-19z" fill="#fff" /><path d="M1 2h20" strokeWidth="3.5" stroke="#666" /><path d="M0 10.500h22" stroke="#f6f5f4" strokeWidth="3" /><path d="M0 10.500h22" stroke={BLUE} strokeDasharray="3 1.2" /></Icon></Slot>
    <Rule $gap={9} />
    <Slot $gap={9}><Icon sw={1.2}><circle cx="14.5" cy="6" r="5.5" /><path d="M1 7h10.500v10.500H1z" fill="#fff" /><path d="M13.500 7l6.500 6.500-6.500 6.500L7 13.500z" fill="#fff" /></Icon></Slot>
    <Rule $gap={9} />
    <Slot $gap={9}><Icon><path d="M3.500 12V.5h10l5 5V10M13.500.5v5h5M4 19.500h5" /><rect x="1" y="13" width="4" height="5" fill="#25a24a" stroke="none" rx="1" /><rect x="7" y="13" width="4" height="5" fill="#e0373f" stroke="none" rx="1" /><path d="M20.500 9v11h-11zM17.500 15v2.500h-3z" fill="#f9d584" stroke={ORANGE} strokeWidth="1.3" /></Icon></Slot>
  </Toolbar>
);

const FormatBar = () => (
  <Toolbar $h={36}>
    <Combo $w={207} $gap={4}>Liberation Sans<ComboArrow><BigArrow /></ComboArrow></Combo>
    <Combo $w={101} $gap={8}>10 pt<ComboArrow><BigArrow /></ComboArrow></Combo>
    <Rule $gap={4} />
    <Glyph $gap={12} $w={16} $size={19}>B</Glyph>
    <Glyph $gap={21} $w={20} $size={20} $italic>I</Glyph>
    <Slot $gap={626}><Icon><path d="M0 3.500h19.500v15.500H0M9 0v5M13 0v5" strokeWidth="1.6" /><path d="M9 8.500h5L11 15" strokeWidth="1.3" /></Icon></Slot>
    <Rule $gap={8} />
    <Slot $gap={9} $w={25}><Decimals add /></Slot>
    <Slot $gap={8} $w={25}><Decimals /></Slot>
    <Rule $gap={6} />
    <Slot $gap={9}><Indent /></Slot>
    <Slot $gap={11}><Indent out /></Slot>
    <Rule $gap={9} />
    <Slot $gap={9}><Icon><path d="M.5 2.500h18V20M.5 2.500V20M9.500 2.500V20M.5 11.500h18" /><path d="M0 20.500h19" stroke={ORANGE} strokeWidth="1.2" /></Icon></Slot>
    <Slot $gap={6} $w={8}><Arrow /></Slot>
    <Slot $gap={9}><Icon><path d="M0 2.500h18" strokeWidth="3" /><path d="M0 8h18" strokeWidth="2" /><path d="M0 12.500h18M0 16.500h18" strokeDasharray="4 1" /><path d="M0 20.500h18" strokeWidth="1.3" /></Icon></Slot>
    <Slot $gap={5} $w={8}><Arrow /></Slot>
    <Slot $gap={6} $w={24}><Icon w={24}><path d="M2.500 1.300h19v15h-19z" stroke={BLUE} strokeWidth="1.6" /><path d="M4.500 3.300h15v11h-15z" fill="#fff" /><path d="M0 19.200h24" stroke="#2a5f9e" strokeWidth="5.5" /></Icon></Slot>
    <Slot $gap={7} $w={8}><Arrow /></Slot>
    <Slot $gap={12} $w={13}><Icon w={13} sw={1.5}><path d="M1 6.500l4.500 4.500L1 15.500M7.500 6.500l4.500 4.500-4.500 4.500" /></Icon></Slot>
  </Toolbar>
);

const columns = "ABCDEFGHIJKLMNOP".split("");
const rows = Array.from({ length: 30 }, (_, i) => 16 + i);

const Sheet = () => (
  <Grid>
    <GridRow>
      <Corner />
      {columns.map((c, i) => <ColHead key={c} $on={i < 3}>{c === "P" ? "" : c}</ColHead>)}
    </GridRow>
    {rows.map((r) => (
      <GridRow key={r}>
        <RowHead $on={r <= 25}>{r}</RowHead>
        {columns.map((c, i) => <Cell key={c} $on={r <= 25 && i < 3} />)}
      </GridRow>
    ))}
    <Selection><CellCursor /><FillHandle /></Selection>
  </Grid>
);

const categories = ["All", "User-defined", "Number", "Percent", "Currency", "Date", "Time", "Scientific", "Fraction", "Boolean Value"];
const formats = ["General", "-1235", "-1234.57", "-1,235", "-1,234.57", "-1,234.57", "(1,234.57)", "(1,235)", "0.0 Million"];

const FormatCells = () => (
  <Dialog>
    <DialogTitle>
      <WindowMenu><MiniWindow /></WindowMenu>
      <span>Format Cells</span>
      <TitleButtons $top={10} $gap={13}><WinShade c={INK} /><WinMax c={INK} s={9} /><WinX c={INK} s={10} /></TitleButtons>
    </DialogTitle>
    <Notebook>
      <Tabs $h={37}>
        <Tab $w={100} $gap={28}>Alignment</Tab>
        <Tab $w={100} $gap={41}>Borders</Tab>
        <Tab $w={100} $gap={45}>Background</Tab>
        <Tab $w={120} $gap={58}>Cell Protection</Tab>
      </Tabs>
      <Tabs $h={38} $last>
        <Tab $w={201} $on>Numbers</Tab>
        <Tab $w={100} $gap={43}>Font</Tab>
        <Tab $w={100} $gap={104}>Font Effects</Tab>
      </Tabs>
      <TabBody>
        <Columns>
          <ListColumn>
            <Heading>Category</Heading>
            <ListBox>{categories.map((c) => <ListItem key={c} $on={c === "Number"}>{c}</ListItem>)}</ListBox>
          </ListColumn>
          <ListColumn>
            <Heading>Format</Heading>
            <ListBox>{formats.map((f, i) => <ListItem key={i}>{f}</ListItem>)}</ListBox>
          </ListColumn>
          <LangColumn>
            <Heading>Language</Heading>
            <LangSelect>English (USA)<BigArrow c="#2e3436" /></LangSelect>
            <Preview>-1234.568</Preview>
          </LangColumn>
        </Columns>
        <Heading $mt={6}>Options</Heading>
        <OptionRows>
          <NumberFields>
            <Field><FieldLabel>Decimal places:</FieldLabel><Spin $focus><SpinValue><Caret />3</SpinValue><SpinButton><Minus /></SpinButton><SpinButton $hot><Plus /></SpinButton></Spin></Field>
            <Field><FieldLabel>Leading zeroes:</FieldLabel><Spin><SpinValue>1</SpinValue><SpinButton><Minus /></SpinButton><SpinButton><Plus /></SpinButton></Spin></Field>
          </NumberFields>
          <Checks>
            <Check><CheckBox /><CheckLabel>Negative numbers red</CheckLabel></Check>
            <Check><CheckBox /><CheckLabel>Thousands separator</CheckLabel></Check>
          </Checks>
        </OptionRows>
        <Heading>Format Code</Heading>
        <CodeRow>
          <CodeInput>0.000</CodeInput>
          <IconButton><Icon w={16} h={14} c="#26a350" sw={2}><path d="M1 8l4.500 4.500L14.500 1.500" /></Icon></IconButton>
          <IconButton><Icon w={16} h={16}><path d="M.5.5h15v11h-9l-3 4v-4h-3z" fill="#fff" /></Icon></IconButton>
          <IconButton $off><Icon w={14} h={14} c="#f59b98" sw={1.4}><path d="M.5.5l13 13M13.500.5l-13 13" /></Icon></IconButton>
        </CodeRow>
        <CodeNote>User-defined</CodeNote>
      </TabBody>
    </Notebook>
    <Actions><Button $start>Help</Button><Button>Reset</Button><Button>Cancel</Button><Button>OK</Button></Actions>
  </Dialog>
);

export default function App() {
  return (
    <Screen>
      <Global />
      <HostPanel><HostIcons /><TrayIcons /></HostPanel>
      <QemuTitle>
        <QemuIcons>
          <QemuLogo size={20} />
          <Icon w={12} h={12} c="#232629" sw={1.5}><path d="M0 12l4.500-4.500" /><path d="M7.500 1l4 4-1.200.5L8 7.500l-.5 2.700-5-5L5.200 4.500 7 2.200z" fill="#232629" stroke="none" /></Icon>
        </QemuIcons>
        <Centered>QEMU</Centered>
        <QemuIcons $end>
          <Icon w={12} h={12} c="#232629" sw={1.2}><path d="M1 3.500l5 5 5-5" /></Icon>
          <Icon w={12} h={12} c="#232629" sw={1.2}><path d="M6 .8L11.200 6 6 11.200.8 6z" /></Icon>
          <Icon w={12} h={12} c="#232629" sw={1.2}><path d="M1.500 1.500l9 9M10.500 1.500l-9 9" /></Icon>
        </QemuIcons>
      </QemuTitle>
      <QemuMenu><span>Machine</span><span>View</span></QemuMenu>
      <Guest>
        <GuestPanel>
          <AppsButton>
            <Icon w={15} h={14} c="#22a3cf" sw={3.5}><path d="M1.500 1.500l3.500 3.500M13.500 1.500L10 5M1.500 12.500L5 9M13.500 12.500L10 9" /><path d="M4 5l3.500 1.500L11 5v4L7.500 8 4 9z" fill="#111" stroke="none" /></Icon>
            Applications
            <Slot $gap={3} $w={4}><Icon w={4} h={12} c="#999"><path d="M0 2.500h4M0 6.500h4M0 10.500h4" /></Icon></Slot>
          </AppsButton>
          <GuestTask><CalcDoc w={15} h={17} />Untitled 1 - LibreOffice ...</GuestTask>
          <Workspaces><Workspace /><Workspace /><Workspace /></Workspaces>
          <ActiveWorkspace>
            <svg width="22" height="20" viewBox="0 0 22 20"><rect x=".5" y=".5" width="21" height="19" fill="#6f716c" stroke="#a5a7a2" /><rect x="4" y="4" width="14" height="12" fill="#e6e7e4" /><path d="M4 5h14" stroke="#3465a4" strokeWidth="2" /></svg>
          </ActiveWorkspace>
          <PanelStatus>
            <Icon w={16} h={14} c="#eee" sw={1.5}><path d="M1 5h3l3-4v12L4 9H1z" fill="#eee" stroke="none" /><path d="M9 4.500q2 2.500 0 5M11.500 3q3 4 0 8M13.500 1q4 6 0 12" /></Icon>
            <Slot $gap={11} $w={17}><Icon w={17} h={16} c="none"><path d="M3 8h10v4H3zM5 12h1.500v3H5zM9 12h1.500v3H9zM0 7h4v1H0z" fill="#8f928e" /><path d="M9 0l7 1-3 4h3l-9 7 1.500-4L5 7z" fill="#f2cf3a" /></Icon></Slot>
            <PanelText $ml={14}>Wed 12 Oct, 16:37</PanelText>
            <PanelText $ml={11}>openeuler</PanelText>
          </PanelStatus>
        </GuestPanel>
        <Calc>
          <CalcTitle>
            <DocIcon><CalcDoc /></DocIcon>
            <span>Untitled 1 - LibreOffice Calc</span>
            <TitleButtons $top={6} $gap={14}><WinShade /><Icon w={9} h={9} c="#8b8e8f" sw={2}><path d="M0 8h9" /></Icon><WinMax /><WinX /></TitleButtons>
          </CalcTitle>
          <MenuBar>
            {["File", "Edit", "View", "Insert", "Format", "Styles", "Sheet", "Data", "Tools", "Window", "Help"].map((m) => <span key={m}>{m}</span>)}
            <DocClose><WinX s={8} /></DocClose>
          </MenuBar>
          <StandardBar />
          <FormatBar />
          <Workarea>
            <SheetPane>
              <Toolbar $h={41}>
                <Combo $w={161} $gap={4}>A16:C25<ComboArrow><BigArrow /></ComboArrow></Combo>
                <Rule $gap={6} />
                <Slot $gap={5} $w={20}><Fx size={20} /></Slot>
                <Slot $gap={6} $w={14}><Icon w={14} h={18} sw={1.3}><path d="M12.500 4V1H1l6 8-6.500 8h12.500v-3" /></Icon></Slot>
                <Slot $gap={7} $w={8}><Arrow /></Slot>
                <Slot $gap={10} $w={12}><Icon w={12} h={12} sw={2}><path d="M0 3h12M0 9h12" /></Icon></Slot>
                <FormulaInput />
                <Slot $gap={3} $w={12}><BigArrow /></Slot>
              </Toolbar>
              <SheetBody>
                <Sheet />
                <ScrollTrack><SplitGrip /><ScrollThumb /></ScrollTrack>
              </SheetBody>
            </SheetPane>
            <Sidebar>
              <SideButton $first><Icon w={14} h={12} c="#8b8e8f" sw={2}><path d="M0 1h14M0 6h14M0 11h14" /></Icon></SideButton>
              <SideButton $on><Icon w={20} h={20} sw={1.2}><path d="M.6.6h18.800v18.800H.6z" fill="#fff" /><path d="M0 2h20" stroke="#555" strokeWidth="3" /><path d="M4 9.500h12M4 13.500h12" /><path d="M10 9.500h4M6 13.500h3" stroke={BLUE} strokeWidth="3" /></Icon></SideButton>
              <SideButton><Icon sw={2}><path d="M1 17L6.500 1h1.800l4 11M3 11h8" /><path d="M12 14c2-4 6-8 9-7 0 3-4 6-7.500 8.500z" fill="#fff" strokeWidth="1.2" /><path d="M6 20.500c2-1 1-5 5-5 3 0 4 4 0 5z" fill="#cfe6f7" stroke={BLUE} strokeWidth="1.2" /></Icon></SideButton>
              <SideButton><Icon c={ORANGE}><path d="M.5 19V1.500h7l2 3h10v3" /><path d="M.5 19.500L5 7.500h17" fill="#f9d584" /><path d="M9 9h12v11H9z" fill="#fff" stroke={INK} strokeWidth="1.3" /><path d="M10 19v-3l3-3 2 2 2-3 3 3v4z" fill="#5aaee6" stroke={BLUE} /><circle cx="12.5" cy="11" r="1" /></Icon></SideButton>
              <SideButton><Icon w={20} h={20} sw={1.2}><circle cx="10" cy="10" r="9.4" fill="#fff" /><path d="M15 4.500l-2.500 8-7.500 3 2.500-8z" fill={BLUE} stroke="none" /><circle cx="10" cy="10" r="1.8" fill="#fff" stroke="none" /></Icon></SideButton>
              <SideButton><Fx /></SideButton>
              <CollapseHandle><Icon w={7} h={8} c="none"><path d="M1 0l5 4-5 4z" fill="#fff" /></Icon></CollapseHandle>
            </Sidebar>
          </Workarea>
        </Calc>
        <FormatCells />
      </Guest>
    </Screen>
  );
}
